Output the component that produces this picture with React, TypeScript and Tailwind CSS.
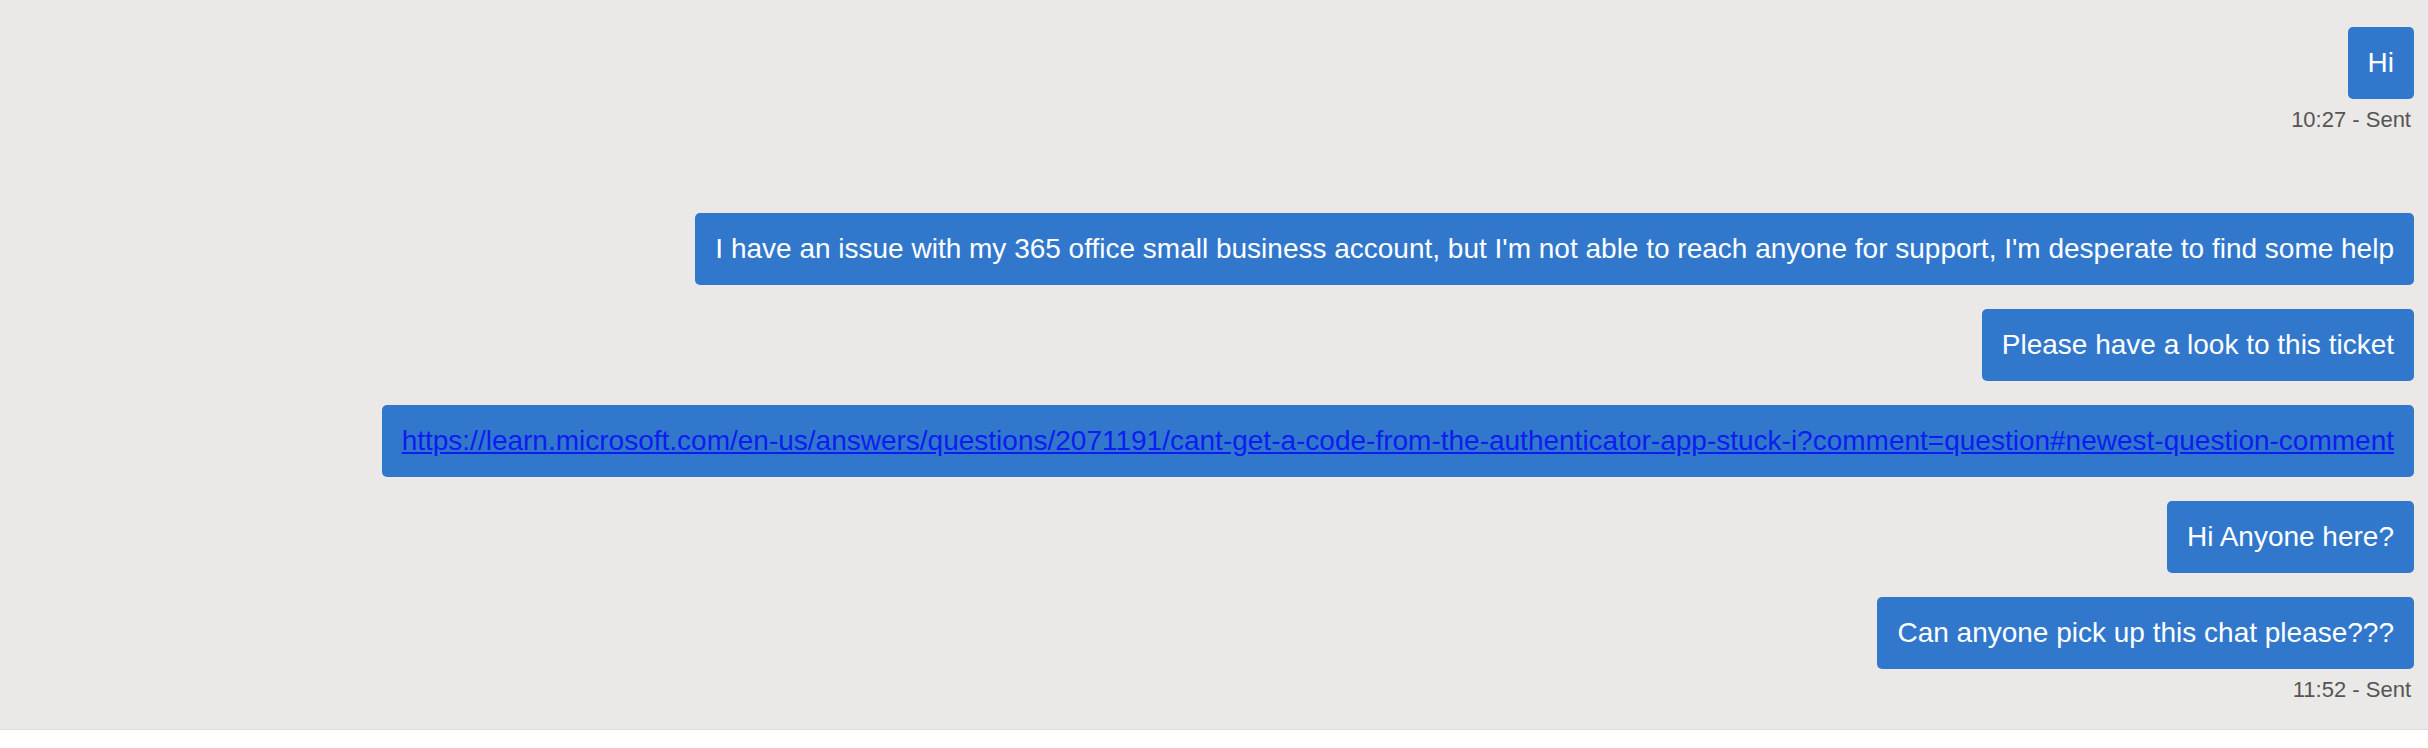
import React from 'react';

type Msg = { text: string; link?: boolean };

const groups: { messages: Msg[]; time: string }[] = [
  { messages: [{ text: 'Hi' }], time: '10:27 - Sent' },
  {
    messages: [
      {
        text: "I have an issue with my 365 office small business account, but I'm not able to reach anyone for support, I'm desperate to find some help",
      },
      { text: 'Please have a look to this ticket' },
      {
        text: 'https://learn.microsoft.com/en-us/answers/questions/2071191/cant-get-a-code-from-the-authenticator-app-stuck-i?comment=question#newest-question-comment',
        link: true,
      },
      { text: 'Hi Anyone here?' },
      { text: 'Can anyone pick up this chat please???' },
    ],
    time: '11:52 - Sent',
  },
];

const Bubble: React.FC<{ msg: Msg }> = ({ msg }) => (
  <div className="bg-[#3178cd] text-white rounded-[5px] px-[20px] py-[15px] text-[28px] leading-[42px] whitespace-nowrap">
    {msg.link ? (
      <a href={msg.text} className="text-[#0d1cf0] underline">
        {msg.text}
      </a>
    ) : (
      msg.text
    )}
  </div>
);

export default function App() {
  return (
    <div className="w-full bg-white" style={{ fontFamily: '"Liberation Sans", Arial, sans-serif' }}>
      <div className="h-[730px] bg-[#ebe9e7] border-b border-[#dedcda] flex flex-col items-end pr-[14px] pt-[27px] gap-[77px]">
        {groups.map((group, i) => (
          <div key={i} className="flex flex-col items-end">
            <div className="flex flex-col items-end gap-[24px]">
              {group.messages.map((m, j) => (
                <Bubble key={j} msg={m} />
              ))}
            </div>
            <div className="text-[22px] leading-[33px] text-[#555555] mt-[4px] pr-[3px]">{group.time}</div>
          </div>
        ))}
      </div>
    </div>
  );
}
